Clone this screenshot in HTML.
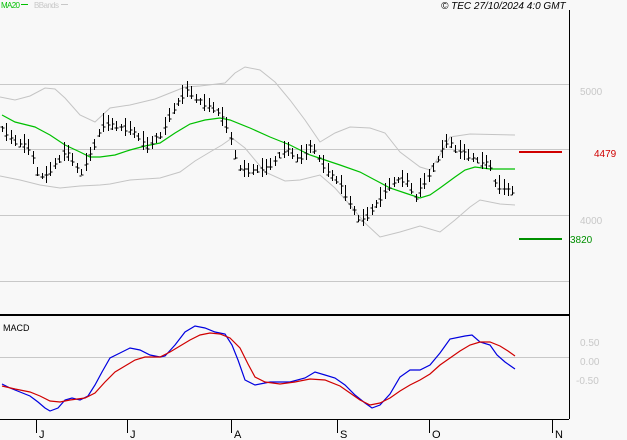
<!DOCTYPE html>
<html><head><meta charset="utf-8"><style>
html,body{margin:0;padding:0;background:#f8f8f8;width:627px;height:440px;overflow:hidden}
svg{display:block}
text{font-family:"Liberation Sans",sans-serif}
</style></head><body>
<svg id="s" width="627" height="440" xmlns="http://www.w3.org/2000/svg">
<rect width="627" height="440" fill="#f8f8f8"/>
<g stroke="#c8c8c8" stroke-width="1">
<line x1="0" y1="84.5" x2="569" y2="84.5"/>
<line x1="0" y1="149.5" x2="569" y2="149.5"/>
<line x1="0" y1="215.5" x2="569" y2="215.5"/>
<line x1="0" y1="281.5" x2="569" y2="281.5"/>
<line x1="0" y1="357.5" x2="569" y2="357.5"/>
</g>
<g fill="none" stroke="#c4c4c4" stroke-width="1">
<polyline points="0,97 15,100 30,96 45,88 55,89 65,98 80,115 95,122 110,108 130,105 155,99 165,95 185,87 200,86 225,83 235,73 245,67 260,70 275,82 290,100 305,120 320,142 335,133 350,127 370,128 385,133 400,152 420,167 430,170 440,155 450,137 470,134 515,135"/>
<polyline points="0,176 20,180 40,185 60,188 80,186 100,185 110,184 130,180 160,178 180,172 195,161 210,152 222,145 232,138 245,148 265,172 285,181 300,180 320,175 335,188 350,205 365,223 380,237 400,232 420,226 440,232 455,220 470,207 480,200 500,204 515,205"/>
</g>
<polyline fill="none" stroke="#00c000" stroke-width="1.2" points="2,115 15,122 35,127 50,135 65,145 80,152 90,157 100,157 115,155 130,150 145,146 160,143 175,133 190,124 205,120 220,118 230,120 250,128 270,137 290,145 310,155 325,160 340,165 360,172 375,180 390,188 405,193 420,198 430,195 440,188 455,177 465,170 475,167 490,169 515,169"/>
<g id="bars" stroke="#000" stroke-width="1" fill="none"></g>
<line x1="569.5" y1="10" x2="569.5" y2="419" stroke="#000"/>
<line x1="0" y1="315" x2="569" y2="315" stroke="#000" stroke-width="2"/>
<line x1="0" y1="419.5" x2="569" y2="419.5" stroke="#000"/>
<line x1="519" y1="152" x2="562" y2="152" stroke="#d00000" stroke-width="2"/>
<line x1="519" y1="239" x2="562" y2="239" stroke="#009000" stroke-width="2"/>
<text x="580" y="95" font-size="10" fill="#c8c8c8">5000</text>
<text x="594" y="157" font-size="10" fill="#d00000">4479</text>
<text x="580" y="224" font-size="10" fill="#c8c8c8">4000</text>
<text x="570" y="243" font-size="10" fill="#009000">3820</text>
<text x="1" y="8" font-size="8" fill="#00c000" textLength="19">MA20</text>
<line x1="21" y1="4.5" x2="28" y2="4.5" stroke="#00c000"/>
<text x="34" y="8" font-size="8" fill="#c8c8c8" textLength="25">BBands</text>
<line x1="61" y1="4.5" x2="68" y2="4.5" stroke="#c8c8c8"/>
<text x="441" y="9" font-size="10" font-style="italic" fill="#000">© TEC 27/10/2024 4:0 GMT</text>
<text x="3" y="331" font-size="9" fill="#000">MACD</text>
<text x="580" y="346" font-size="10" fill="#c8c8c8">0.50</text>
<text x="580" y="365" font-size="10" fill="#c8c8c8">0.00</text>
<text x="576" y="384" font-size="10" fill="#c8c8c8">-0.50</text>
<polyline fill="none" stroke="#0000e0" stroke-width="1.2" points="2,384 10,388 20,392 30,396 38,402 45,408 50,411 58,408 65,400 72,398 80,400 88,396 95,385 102,372 110,358 120,353 130,348 140,350 150,355 160,357 165,356 175,345 185,332 195,326 205,328 215,332 225,334 232,345 238,360 245,380 255,385 270,382 290,382 305,378 315,372 325,375 335,378 345,385 355,395 365,403 372,408 380,405 390,394 400,377 410,370 420,370 430,365 440,353 450,339 465,336 472,335 480,342 490,345 497,355 505,362 515,369"/>
<polyline fill="none" stroke="#d00000" stroke-width="1.2" points="2,386 15,389 30,392 40,396 50,401 60,402 70,400 85,398 95,393 105,382 115,372 125,366 135,360 145,357 160,357 170,352 180,346 190,340 200,335 210,333 220,334 230,338 240,348 248,364 255,377 265,382 280,384 295,382 310,379 325,380 340,386 350,393 360,400 370,405 380,403 390,398 400,391 410,385 420,380 430,374 440,365 450,358 460,351 470,345 480,342 490,342 500,346 508,351 515,356"/>
<g stroke="#000" stroke-width="1">
<line x1="36.5" y1="419" x2="36.5" y2="433"/><line x1="127.5" y1="419" x2="127.5" y2="433"/>
<line x1="231.5" y1="419" x2="231.5" y2="433"/><line x1="337.5" y1="419" x2="337.5" y2="433"/>
<line x1="429.5" y1="419" x2="429.5" y2="433"/><line x1="552.5" y1="419" x2="552.5" y2="433"/>
</g>
<g font-size="11" fill="#000">
<text x="39" y="438">J</text><text x="130" y="438">J</text><text x="234" y="438">A</text>
<text x="340" y="438">S</text><text x="432" y="438">O</text><text x="555" y="438">N</text>
</g>
</svg>
<script>
var pts=[[2,130],[12,140],[22,145],[30,150],[38,175],[45,178],[55,165],[65,152],[72,160],[80,175],[88,160],[95,145],[102,125],[110,125],[120,128],[130,130],[140,140],[148,148],[155,140],[162,135],[170,115],[180,100],[188,90],[196,100],[205,105],[212,108],[220,115],[228,130],[235,155],[240,170],[250,172],[258,170],[265,170],[275,162],[282,152],[290,150],[295,160],[305,155],[312,145],[320,162],[330,175],[340,185],[350,205],[360,222],[368,215],[380,200],[390,185],[400,180],[408,182],[415,200],[420,190],[430,175],[440,155],[448,140],[455,150],[465,155],[475,160],[482,163],[490,165],[495,185],[505,190],[513,192]];
function y(x){for(var i=0;i<pts.length-1;i++){if(x<=pts[i+1][0]){var t=(x-pts[i][0])/(pts[i+1][0]-pts[i][0]);return pts[i][1]+t*(pts[i+1][1]-pts[i][1]);}}return pts[pts.length-1][1];}
var d="";var k=0;
for(var x=2;x<=514;x+=4.4){var xi=Math.round(x)+0.5;var c=y(x);var r=4+((k*7)%9);var o=c+((k*5)%7)-3;var cl=c+((k*3)%5)-2;
d+="M"+xi+" "+(c-r).toFixed(0)+"V"+(c+r*0.6).toFixed(0)+"M"+(xi-2)+" "+o.toFixed(0)+"h2M"+xi+" "+cl.toFixed(0)+"h2";k++;}
var p=document.createElementNS("http://www.w3.org/2000/svg","path");p.setAttribute("d",d);document.getElementById("bars").appendChild(p);
</script>
</body></html>
